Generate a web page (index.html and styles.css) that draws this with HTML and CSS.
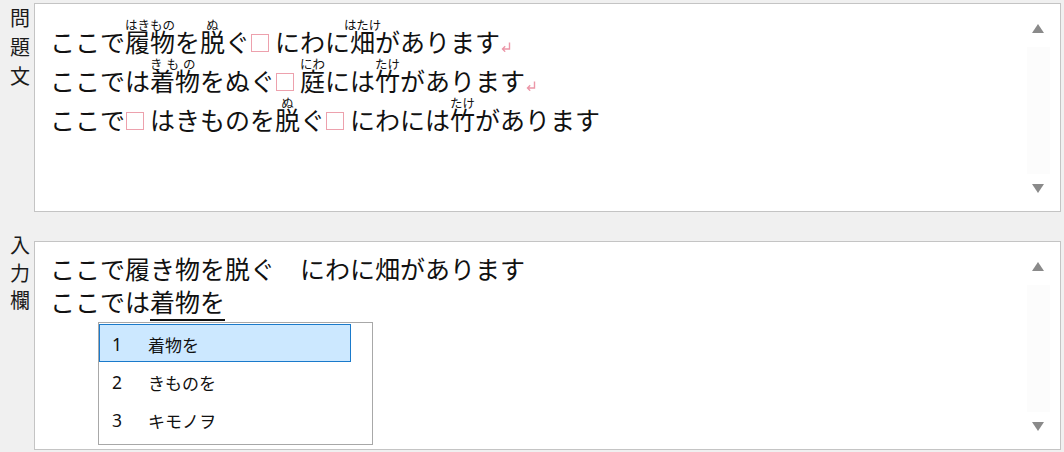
FILE: index.html
```html
<!DOCTYPE html>
<html lang="ja">
<head>
<meta charset="utf-8">
<title>問題文と入力欄</title>
<link rel="stylesheet" href="styles.css">
</head>
<body>
<main class="page">
  <section class="row">
    <div class="label label-question"><span>問</span><span>題</span><span>文</span></div>
    <div class="box">
      <div class="content question">
        <div class="line">ここで<ruby>履物<rt>はきもの</rt></ruby>を<ruby>脱<rt>ぬ</rt></ruby>ぐ<span class="blank"></span>にわに<ruby>畑<rt>はたけ</rt></ruby>があります<svg class="ret" width="10" height="10" viewBox="0 0 10 10"><path d="M8.5 0.5V7H1.5M4.2 4.3L1.5 7L4.2 9.7"/></svg></div>
        <div class="line">ここでは<ruby>着物<rt class="spread">きもの</rt></ruby>をぬぐ<span class="blank"></span><ruby>庭<rt>にわ</rt></ruby>には<ruby>竹<rt>たけ</rt></ruby>があります<svg class="ret" width="10" height="10" viewBox="0 0 10 10"><path d="M8.5 0.5V7H1.5M4.2 4.3L1.5 7L4.2 9.7"/></svg></div>
        <div class="line">ここで<span class="blank"></span>はきものを<ruby>脱<rt>ぬ</rt></ruby>ぐ<span class="blank"></span>にわには<ruby>竹<rt>たけ</rt></ruby>があります</div>
      </div>
      <div class="scroll">
        <svg class="arrow" width="12" height="9" viewBox="0 0 12 9"><polygon points="6,0 12,9 0,9"/></svg>
        <div class="track"></div>
        <svg class="arrow" width="12" height="9" viewBox="0 0 12 9"><polygon points="0,0 12,0 6,9"/></svg>
      </div>
    </div>
  </section>

  <section class="row">
    <div class="label label-input"><span>入</span><span>力</span><span>欄</span></div>
    <div class="box box-input">
      <div class="content answer">
        <div class="line">ここで履き物を脱ぐ　にわに畑があります</div>
        <div class="line">ここでは<span class="composing">着物を</span></div>
        <ul class="candidates">
          <li class="candidate selected"><span class="num">1</span><span class="word">着物を</span></li>
          <li class="candidate"><span class="num">2</span><span class="word">きものを</span></li>
          <li class="candidate"><span class="num">3</span><span class="word">キモノヲ</span></li>
        </ul>
      </div>
      <div class="scroll">
        <svg class="arrow" width="12" height="9" viewBox="0 0 12 9"><polygon points="6,0 12,9 0,9"/></svg>
        <div class="track"></div>
        <svg class="arrow" width="12" height="9" viewBox="0 0 12 9"><polygon points="0,0 12,0 6,9"/></svg>
      </div>
    </div>
  </section>
</main>
</body>
</html>
```

FILE: styles.css
```css
* { box-sizing: border-box; }

html, body {
  margin: 0;
  padding: 0;
  background: #f0f0f0;
}

body {
  font-family: "Noto Sans CJK JP", "Noto Sans", sans-serif;
  color: #111;
  width: 1064px;
  height: 452px;
  overflow: hidden;
}

.page {
  display: flex;
  flex-direction: column;
  gap: 29px;
  padding: 3px 3px 0 0;
}

.row {
  display: flex;
  align-items: flex-start;
}

.label {
  width: 34px;
  flex: none;
  padding-left: 10px;
  display: flex;
  flex-direction: column;
  font-size: 20px;
  color: #1a1a1a;
}

.label-question { line-height: 29px; }

.label-input {
  line-height: 27.5px;
  margin-top: -10px;
}

.box {
  flex: 1;
  height: 209px;
  background: #fff;
  border: 1px solid #c4c4c4;
  display: flex;
}

.content {
  flex: 1;
  position: relative;
  font-size: 25px;
  padding-left: 15px;
  white-space: nowrap;
}

.question { padding-top: 18px; }
.question .line { height: 39px; line-height: 39px; }

.answer { padding-top: 10px; }
.answer .line { height: 33px; line-height: 33px; }

ruby {
  display: inline-block;
  position: relative;
}

rt {
  position: absolute;
  top: -3px;
  left: 50%;
  transform: translateX(-50%);
  font-size: 12.5px;
  line-height: 12px;
  white-space: nowrap;
  color: #111;
}

rt.spread {
  left: 0;
  transform: none;
  letter-spacing: 4px;
}

.blank {
  display: inline-block;
  width: 18px;
  height: 18px;
  margin: 0 6px 0 1px;
  border: 1px solid #eda1ad;
}

.ret {
  margin-left: 1px;
  vertical-align: 0;
  fill: none;
  stroke: #ec97a8;
  stroke-width: 1.4;
}

.composing {
  border-bottom: 2px solid #111;
}

.candidates {
  position: absolute;
  left: 63px;
  top: 80px;
  width: 275px;
  height: 123px;
  margin: 0;
  padding: 1px 0 0 0;
  list-style: none;
  background: #fff;
  border: 1px solid #a8a8a8;
}

.candidate {
  width: 252px;
  height: 38px;
  padding: 3px 0 0 12px;
  display: flex;
  align-items: center;
  border: 1px solid transparent;
  font-size: 17px;
  line-height: 1;
}

.candidate.selected {
  background: #cce8ff;
  border-color: #1a7acb;
}

.num {
  width: 36px;
  font-family: "Noto Sans", sans-serif;
  font-size: 17.5px;
  color: #111;
}

.word { color: #111; }

.scroll {
  width: 36px;
  margin-right: 4px;
  flex: none;
  display: flex;
  flex-direction: column;
  align-items: center;
  padding: 20px 0 18px;
}

.arrow {
  flex: none;
  fill: #8a8a8a;
}

.track {
  flex: 1;
  width: 23px;
  margin: 14px 0 10px;
  background: #fcfcfc;
}
```
